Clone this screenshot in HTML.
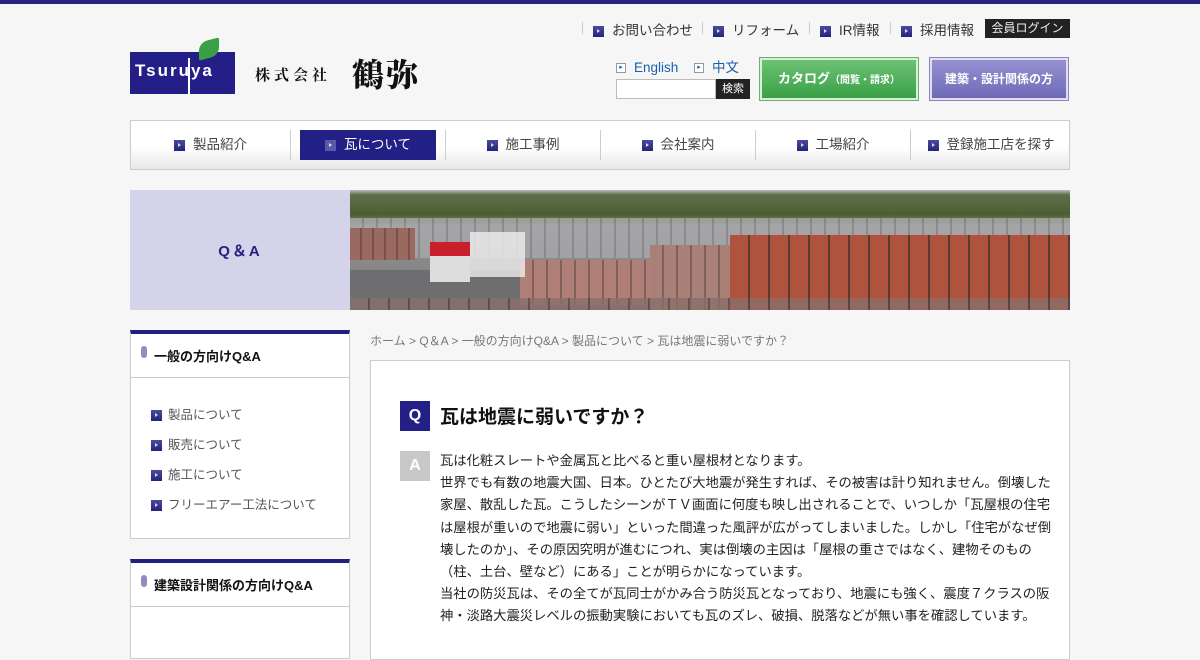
<!DOCTYPE html>
<html><head><meta charset="utf-8"><style>
*{margin:0;padding:0;box-sizing:border-box}
body{width:1200px;height:630px;overflow:hidden;background:#f6f6f6;font-family:"Liberation Sans","Noto Sans CJK JP",sans-serif;color:#333;position:relative}
.a{position:absolute}
.ic{display:inline-block;width:11px;height:11px;background:linear-gradient(#4a4aa0,#23237a);position:relative;vertical-align:middle}
.ic:after{content:"";position:absolute;left:4px;top:3px;border-left:3px solid #fff;border-top:2.5px solid transparent;border-bottom:2.5px solid transparent;opacity:.8}
.tl{font-size:13.5px;color:#333;top:19px}
.sep{width:1px;height:12px;background:#ccc;top:22px}
.nav{left:130px;top:120px;width:940px;height:50px;border:1px solid #ccc;background:linear-gradient(#fff 0%,#fff 55%,#e8e8e8 100%)}
.ni{position:absolute;top:9px;height:30px;line-height:30px;font-size:13.5px;color:#444;text-align:center}
.ns{position:absolute;top:9px;width:1px;height:30px;background:#ccc}
.sb{background:#fff;border:1px solid #ccc;border-top:4px solid #21207e}
.sh{height:44px;border-bottom:1px solid #ccc;font-size:13px;font-weight:bold;color:#111;padding:12px 0 0 23px;position:relative}
.sh:before{content:"";position:absolute;left:10px;top:12px;width:6px;height:12px;border-radius:3px;background:#8e8cc4}
.si{font-size:12.5px;color:#555;position:absolute;left:20px}
.si .ic{margin-right:6px;width:11px;height:11px}
</style></head><body>
<div class="a" style="left:0;top:0;width:1200px;height:4px;background:#27237f"></div>

<div class="a sep" style="left:582px"></div>
<div class="a tl" style="left:593px"><span class="ic" style="margin-right:8px"></span>お問い合わせ</div>
<div class="a sep" style="left:702px"></div>
<div class="a tl" style="left:713px"><span class="ic" style="margin-right:8px"></span>リフォーム</div>
<div class="a sep" style="left:809px"></div>
<div class="a tl" style="left:820px"><span class="ic" style="margin-right:8px"></span>IR情報</div>
<div class="a sep" style="left:890px"></div>
<div class="a tl" style="left:901px"><span class="ic" style="margin-right:8px"></span>採用情報</div>
<div class="a" style="left:985px;top:19px;width:85px;height:19px;background:#222;color:#eee;font-size:12px;text-align:center;line-height:19px">会員ログイン</div>

<div class="a" style="left:130px;top:52px;width:105px;height:42px;background:#231f87"></div>
<div class="a" style="left:199px;top:40px;width:20px;height:18px;background:#3aa048;border-radius:8px 2px 8px 2px;transform:skewY(-15deg)"></div>
<div class="a" style="left:188px;top:58px;width:2px;height:36px;background:#fff"></div>
<div class="a" style="left:135px;top:61px;color:#fff;font-weight:bold;font-size:17px;letter-spacing:2px">Tsuruya</div>
<div class="a" style="left:255px;top:64px;font-size:15px;font-weight:bold;color:#111;letter-spacing:4px;font-family:'Noto Serif CJK SC',serif">株式会社</div>
<div class="a" style="left:352px;top:53px;font-size:32px;font-weight:900;color:#111;letter-spacing:2px;font-family:'Noto Serif CJK SC',serif;line-height:40px">鶴弥</div>

<div class="a" style="left:616px;top:56px;font-size:13.5px;color:#1a5fb0"><span style="display:inline-block;width:10px;height:10px;border:1px solid #999;background:#fff;font-size:7px;line-height:8px;text-align:center;color:#1a5fb0;vertical-align:middle;margin-right:8px">▸</span>English <span style="display:inline-block;width:10px;height:10px;border:1px solid #999;background:#fff;font-size:7px;line-height:8px;text-align:center;color:#1a5fb0;vertical-align:middle;margin:0 8px 0 12px">▸</span>中文</div>
<div class="a" style="left:616px;top:79px;width:100px;height:20px;background:#fff;border:1px solid #bbb"></div>
<div class="a" style="left:716px;top:79px;width:34px;height:20px;background:#222;color:#fff;font-size:11px;text-align:center;line-height:20px">検索</div>
<div class="a" style="left:760px;top:58px;width:158px;height:42px;background:linear-gradient(#6cc274,#3aa047);border:2px solid #d9efd9;outline:1px solid #6ab070;color:#fff;font-weight:bold;font-size:13px;text-align:center;line-height:38px">カタログ<span style="font-size:10px">（閲覧・請求）</span></div>
<div class="a" style="left:930px;top:58px;width:138px;height:42px;background:linear-gradient(#9591d0,#6f6ab8);border:2px solid #e0def0;outline:1px solid #8a86c0;color:#fff;font-weight:bold;font-size:12px;text-align:center;line-height:38px">建築・設計関係の方</div>

<div class="a nav">
<div class="ni" style="left:0;width:159px"><span class="ic" style="margin-right:8px"></span>製品紹介</div>
<div class="ns" style="left:159px"></div>
<div class="ni" style="left:169px;width:136px;background:#221f85;color:#fff"><span class="ic" style="margin-right:8px;background:#5a58a8"></span>瓦について</div>
<div class="ns" style="left:314px"></div>
<div class="ni" style="left:315px;width:154px"><span class="ic" style="margin-right:8px"></span>施工事例</div>
<div class="ns" style="left:469px"></div>
<div class="ni" style="left:470px;width:154px"><span class="ic" style="margin-right:8px"></span>会社案内</div>
<div class="ns" style="left:624px"></div>
<div class="ni" style="left:625px;width:154px"><span class="ic" style="margin-right:8px"></span>工場紹介</div>
<div class="ns" style="left:779px"></div>
<div class="ni" style="left:780px;width:160px"><span class="ic" style="margin-right:8px"></span>登録施工店を探す</div>
</div>

<div class="a" style="left:130px;top:190px;width:220px;height:120px;background:#d4d3ea;color:#25237f;font-weight:bold;font-size:15px;text-align:center;line-height:124px;letter-spacing:2px">Q＆A</div>
<div class="a" style="left:350px;top:190px;width:720px;height:120px;overflow:hidden;background:linear-gradient(#b8bcc0 0%,#5f7048 4%,#4a5e34 20%,#6c7a50 26%,#9a9a9a 30%,#8e8e90 45%,#7a7a7a 100%)">
<div class="a" style="left:0;top:28px;width:720px;height:40px;background:repeating-linear-gradient(90deg,#a8a8ac 0 12px,#8a8a8e 12px 14px);opacity:.8"></div>
<div class="a" style="left:0;top:38px;width:65px;height:32px;background:repeating-linear-gradient(90deg,#9a6a60 0 10px,#7a5048 10px 12px)"></div>
<div class="a" style="left:380px;top:45px;width:340px;height:75px;background:repeating-linear-gradient(90deg,#b0533e 0 18px,#5a3a32 18px 20px)"></div>
<div class="a" style="left:300px;top:55px;width:80px;height:65px;background:repeating-linear-gradient(90deg,#a88078 0 12px,#806058 12px 14px)"></div>
<div class="a" style="left:170px;top:70px;width:130px;height:45px;background:repeating-linear-gradient(90deg,#b08078 0 12px,#806058 12px 14px)"></div>
<div class="a" style="left:0;top:80px;width:170px;height:40px;background:#6e6e70"></div>
<div class="a" style="left:80px;top:52px;width:40px;height:40px;background:#ddd"></div>
<div class="a" style="left:80px;top:52px;width:40px;height:14px;background:#c8202a"></div>
<div class="a" style="left:120px;top:42px;width:55px;height:45px;background:#eee;opacity:.8"></div>
<div class="a" style="left:0;top:108px;width:720px;height:12px;background:repeating-linear-gradient(90deg,#8a6e6a 0 18px,#55484a 18px 20px);opacity:.8"></div>
</div>

<div class="a sb" style="left:130px;top:330px;width:220px;height:209px">
<div class="sh">一般の方向けQ&amp;A</div>
<div class="si" style="top:70px"><span class="ic"></span>製品について</div>
<div class="si" style="top:100px"><span class="ic"></span>販売について</div>
<div class="si" style="top:130px"><span class="ic"></span>施工について</div>
<div class="si" style="top:160px"><span class="ic"></span>フリーエアー工法について</div>
</div>
<div class="a sb" style="left:130px;top:559px;width:220px;height:100px">
<div class="sh">建築設計関係の方向けQ&amp;A</div>
</div>

<div class="a" style="left:370px;top:332px;font-size:12px;color:#777">ホーム &gt; Q＆A &gt; 一般の方向けQ&amp;A &gt; 製品について &gt; 瓦は地震に弱いですか？</div>
<div class="a" style="left:370px;top:360px;width:700px;height:300px;background:#fff;border:1px solid #ccc"></div>
<div class="a" style="left:400px;top:401px;width:30px;height:30px;background:#221f85;color:#fff;font-weight:bold;font-size:16px;text-align:center;line-height:30px">Q</div>
<div class="a" style="left:440px;top:402px;font-size:19px;font-weight:bold;color:#111">瓦は地震に弱いですか？</div>
<div class="a" style="left:400px;top:451px;width:30px;height:30px;background:#c8c8c8;color:#fff;font-weight:bold;font-size:16px;text-align:center;line-height:30px">A</div>
<div class="a" style="left:440px;top:450px;width:613px;font-size:13.3px;line-height:22.2px;color:#222">瓦は化粧スレートや金属瓦と比べると重い屋根材となります。<br>世界でも有数の地震大国、日本。ひとたび大地震が発生すれば、その被害は計り知れません。倒壊した家屋、散乱した瓦。こうしたシーンがＴＶ画面に何度も映し出されることで、いつしか「瓦屋根の住宅は屋根が重いので地震に弱い」といった間違った風評が広がってしまいました。しかし「住宅がなぜ倒壊したのか」、その原因究明が進むにつれ、実は倒壊の主因は「屋根の重さではなく、建物そのもの（柱、土台、壁など）にある」ことが明らかになっています。<br>当社の防災瓦は、その全てが瓦同士がかみ合う防災瓦となっており、地震にも強く、震度７クラスの阪神・淡路大震災レベルの振動実験においても瓦のズレ、破損、脱落などが無い事を確認しています。</div>
</body></html>
